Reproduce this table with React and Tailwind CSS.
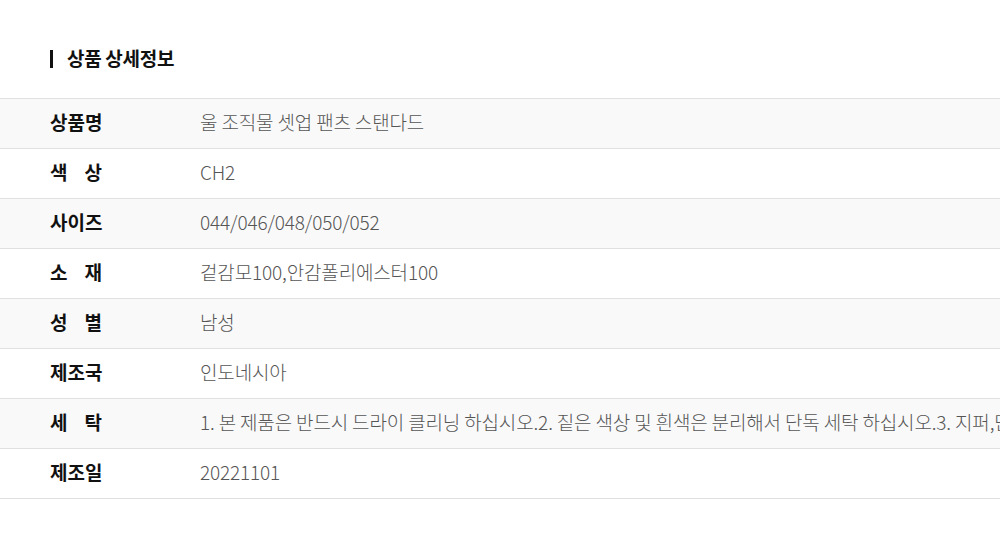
import React from 'react';

const rows = [
  { label: '상품명', value: '울 조직물 셋업 팬츠 스탠다드' },
  { label: '색상', value: 'CH2' },
  { label: '사이즈', value: '044/046/048/050/052' },
  { label: '소재', value: '겉감모100,안감폴리에스터100' },
  { label: '성별', value: '남성' },
  { label: '제조국', value: '인도네시아' },
  {
    label: '세탁',
    value:
      '1. 본 제품은 반드시 드라이 클리닝 하십시오.2. 짙은 색상 및 흰색은 분리해서 단독 세탁 하십시오.3. 지퍼,단추 등 부자재는 잠근 후 세탁하십시오.',
  },
  { label: '제조일', value: '20221101' },
];

export default function App() {
  return (
    <div
      className="w-[1000px] h-[548px] bg-white overflow-hidden"
      style={{ fontFamily: '"Noto Sans CJK KR", "Noto Sans", sans-serif' }}
    >
      <div className="pt-[50px] px-[50px] pb-[30px] flex items-center">
        <span className="w-[3px] h-[18px] bg-[#111] mr-[14px]" />
        <h2 className="text-[19px] leading-[20px] font-bold text-[#111] tracking-[-0.3px] -mt-[2px]">상품 상세정보</h2>
      </div>
      <div className="border-t border-[#e0e0e0] w-[1200px]">
        {rows.map((r, i) => (
          <div
            key={r.label}
            className={
              'h-[50px] flex items-center border-b border-[#e0e0e0] whitespace-nowrap pb-[2px] ' +
              (i % 2 === 0 ? 'bg-[#f9f9f9]' : 'bg-white')
            }
          >
            <div className="w-[200px] pl-[50px] shrink-0">
              <div className="w-[52px] flex justify-between text-[19px] font-bold text-[#111]">
                {r.label.split('').map((c, j) => (
                  <span key={j}>{c}</span>
                ))}
              </div>
            </div>
            <div className="text-[19px] font-light text-[#555] tracking-[-0.15px]">{r.value}</div>
          </div>
        ))}
      </div>
    </div>
  );
}
